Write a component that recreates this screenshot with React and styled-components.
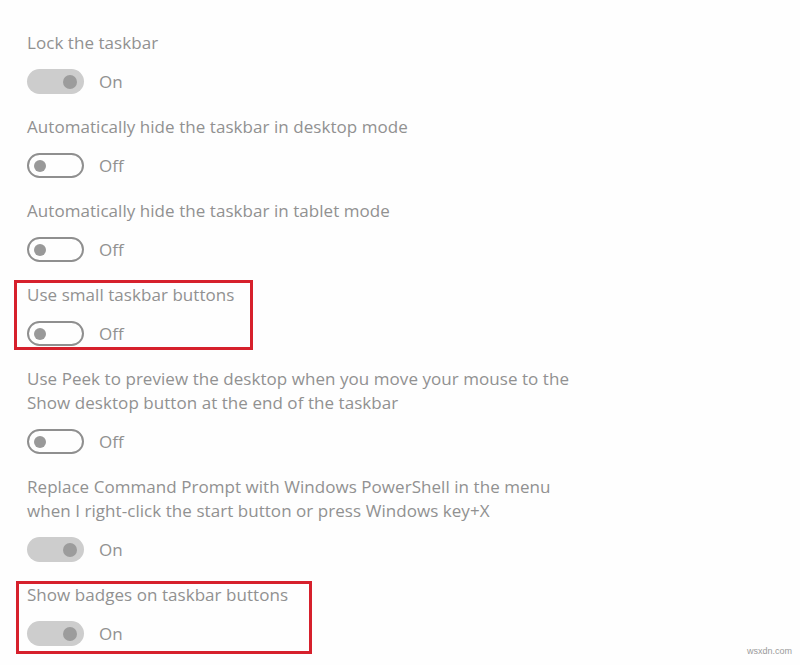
import React from 'react';
import styled, { createGlobalStyle } from 'styled-components';

const GlobalStyle = createGlobalStyle`
  html, body {
    margin: 0;
    padding: 0;
    background: #ffffff;
  }
  body {
    font-family: 'Open Sans', 'Liberation Sans', sans-serif;
  }
`;

const Page = styled.div`
  position: relative;
  width: 800px;
  height: 665px;
  overflow: hidden;
  background: #fefefe;
  padding: 31px 0 0 27px;
  box-sizing: border-box;
`;

const List = styled.div`
  display: flex;
  flex-direction: column;
  gap: 21px;
`;

const Setting = styled.div`
  position: relative;
  display: flex;
  flex-direction: column;
  gap: 14px;
`;

const Label = styled.div`
  font-size: 17px;
  letter-spacing: 0.05px;
  line-height: 24px;
  color: #919191;
  white-space: pre-line;
`;

const Row = styled.div`
  display: flex;
  align-items: center;
  gap: 15px;
  height: 25px;
`;

const Track = styled.div`
  width: 57px;
  height: 25px;
  border-radius: 13px;
  box-sizing: border-box;
  display: flex;
  align-items: center;
  justify-content: ${(p) => (p.on ? 'flex-end' : 'flex-start')};
  padding: ${(p) => (p.on ? '0 7px' : '0 5px')};
  background: ${(p) => (p.on ? '#cdcdcd' : 'transparent')};
  border: ${(p) => (p.on ? 'none' : '2.5px solid #8f8f8f')};
`;

const Knob = styled.div`
  width: ${(p) => (p.on ? '14px' : '12px')};
  height: ${(p) => (p.on ? '14px' : '12px')};
  border-radius: 50%;
  background: ${(p) => (p.on ? '#9c9c9c' : '#999999')};
`;

const State = styled.span`
  font-size: 17px;
  color: #919191;
`;

const Highlight = styled.div`
  position: absolute;
  left: ${(p) => p.left}px;
  top: ${(p) => p.top}px;
  width: ${(p) => p.width}px;
  height: ${(p) => p.height}px;
  border: 3px solid #d6202c;
  box-sizing: border-box;
  pointer-events: none;
`;

const Watermark = styled.div`
  position: absolute;
  right: 8px;
  bottom: 9px;
  font-family: 'Liberation Sans', sans-serif;
  font-size: 9px;
  color: #9a9a9a;
`;

const settings = [
  { label: 'Lock the taskbar', on: true },
  { label: 'Automatically hide the taskbar in desktop mode', on: false },
  { label: 'Automatically hide the taskbar in tablet mode', on: false },
  {
    label: 'Use small taskbar buttons',
    on: false,
    box: { left: -13, top: -3, width: 239, height: 70 },
  },
  {
    label:
      'Use Peek to preview the desktop when you move your mouse to the\nShow desktop button at the end of the taskbar',
    on: false,
  },
  {
    label:
      'Replace Command Prompt with Windows PowerShell in the menu\nwhen I right-click the start button or press Windows key+X',
    on: true,
  },
  {
    label: 'Show badges on taskbar buttons',
    on: true,
    box: { left: -11, top: -2, width: 296, height: 73 },
  },
];

const Toggle = ({ on }) => (
  <Row>
    <Track on={on ? 1 : 0}>
      <Knob on={on ? 1 : 0} />
    </Track>
    <State>{on ? 'On' : 'Off'}</State>
  </Row>
);

export default function App() {
  return (
    <>
      <GlobalStyle />
      <Page>
        <List>
          {settings.map((s) => (
            <Setting key={s.label}>
              <Label>{s.label}</Label>
              <Toggle on={s.on} />
              {s.box && <Highlight {...s.box} />}
            </Setting>
          ))}
        </List>
        <Watermark>wsxdn.com</Watermark>
      </Page>
    </>
  );
}
